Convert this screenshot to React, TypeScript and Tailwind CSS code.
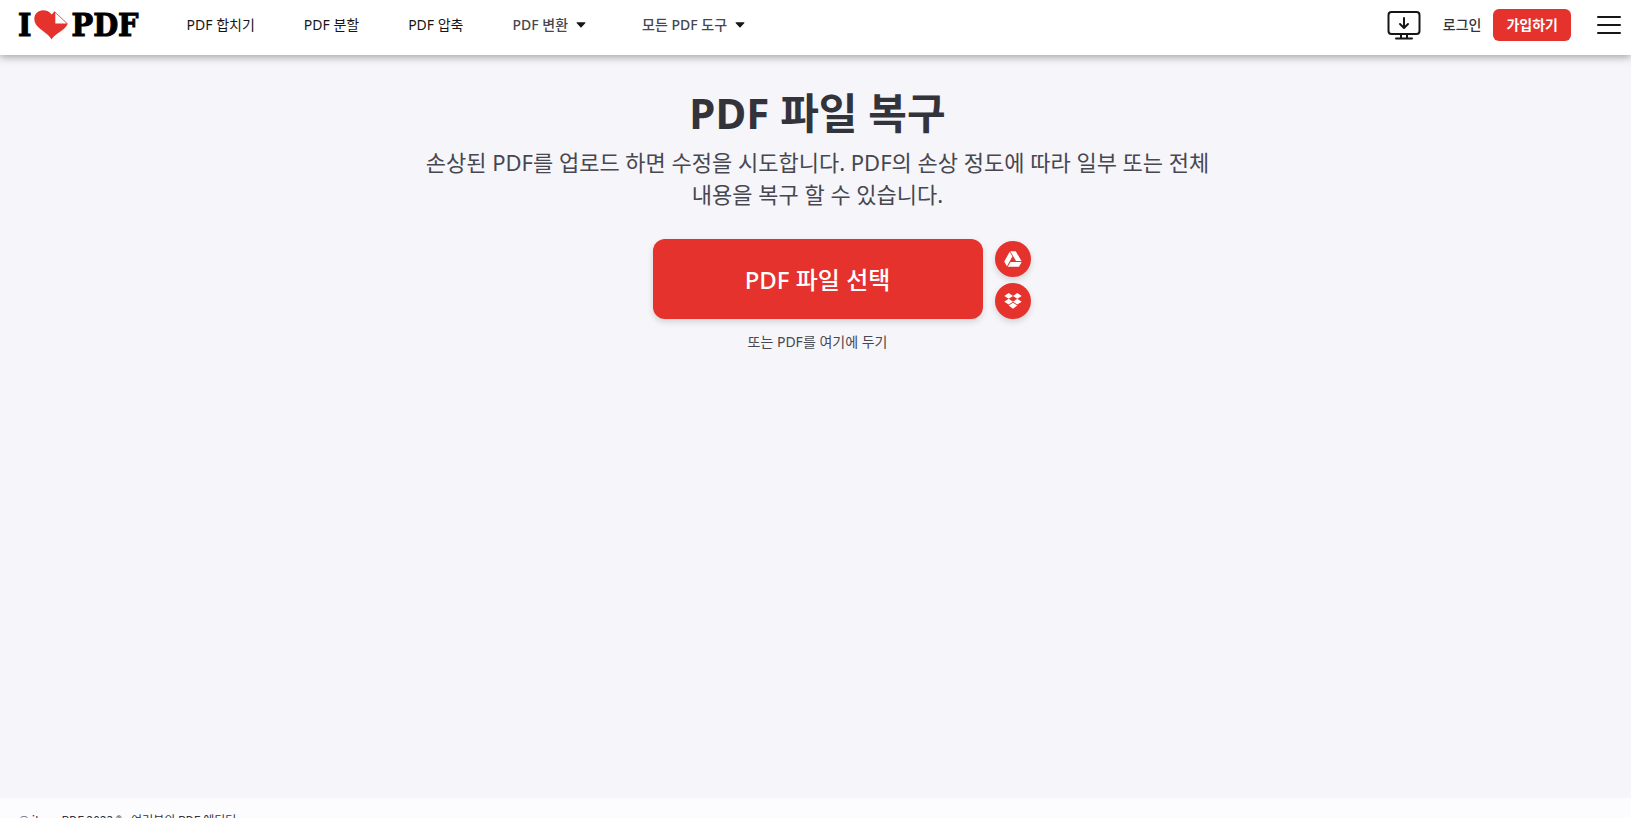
/**
 * Repair PDF page
 * Top bar, upload area and footer
 */

import React from 'react';

interface NavItem {
    label: string;
    hasMenu?: boolean;
}

const NAV_ITEMS: NavItem[] = [
    { label: 'PDF 합치기' },
    { label: 'PDF 분할' },
    { label: 'PDF 압축' },
    { label: 'PDF 변환', hasMenu: true },
    { label: '모든 PDF 도구', hasMenu: true },
];

function Logo() {
    return (
        <a
            href="#"
            aria-label="iLovePDF"
            className="flex items-center gap-[3px] font-['DejaVu_Serif_Condensed','DejaVu_Serif',serif] text-[32px] leading-8 font-bold text-black [-webkit-text-stroke:1px_black]"
        >
            <span>I</span>
            <svg width="34" height="30" viewBox="0 0 34 30" aria-hidden="true">
                <path d="M17.500 29.500C16.500 27 12.500 23.500 7 19.500C2.500 16.200.3 13 .3 9C.3 4 4.200.3 9 .3C12.500.3 15.800 1.800 17.800 4.500L20.500 1.200L33.800 13.700C32 17.500 28.500 20.200 25 22.600C21.500 25 18.800 27.500 17.500 29.500Z" fill="#e5322d" />
                <path d="M21.300 2.700V13.600H32.600Z" fill="#fff" />
            </svg>
            <span>PDF</span>
        </a>
    );
}

function Caret() {
    return (
        <svg width="10" height="6" viewBox="0 0 10 6" className="mr-2" aria-hidden="true">
            <path d="M1.200.3h7.600c.6 0 .8.6.4 1L5.500 5.300c-.3.300-.7.300-1 0L.8 1.300c-.4-.4-.2-1 .4-1z" fill="#161616" />
        </svg>
    );
}

function Header() {
    return (
        <header className="relative flex h-[55px] items-center bg-white pr-[9px] pb-[6px] pl-[18px] shadow-[0_2px_8px_rgba(0,0,0,0.35)]">
            <Logo />
            <nav className="ml-6 flex items-center pt-px text-sm">
                {NAV_ITEMS.map((item) =>
                    item.hasMenu ? (
                        <button key={item.label} type="button" className="flex items-center gap-2 px-6 font-medium text-[#47474f]">
                            {item.label}
                            <Caret />
                        </button>
                    ) : (
                        <a key={item.label} href="#" className="pr-[25px] pl-6 text-[#161616]">
                            {item.label}
                        </a>
                    )
                )}
            </nav>
            <div className="ml-auto flex items-center text-sm">
                <a href="#" aria-label="데스크톱 앱" className="mr-[22px]">
                    <svg width="34" height="30" viewBox="0 0 34 30" fill="none" stroke="#161616" strokeWidth="2" strokeLinecap="round" strokeLinejoin="round">
                        <rect x="1.500" y="2" width="31" height="22" rx="3" />
                        <path d="M14 24v3.500M20 24v3.500M9 28.500h16" />
                        <path d="M17 8v9.500M13 14l4 4 4-4" />
                    </svg>
                </a>
                <a href="#" className="mr-3 font-medium text-[#33333b]">로그인</a>
                <a href="#" className="rounded-md bg-[#e5322d] px-[13px] py-[6px] leading-5 font-bold text-white">가입하기</a>
                <button type="button" aria-label="메뉴" className="ml-[25px]">
                    <svg width="26" height="20" viewBox="0 0 26 20" stroke="#161616" strokeWidth="2" strokeLinecap="round">
                        <path d="M2 2h22M2 10h22M2 18h22" />
                    </svg>
                </button>
            </div>
        </header>
    );
}

function CloudButtons() {
    return (
        <div className="absolute top-[2px] left-full ml-3 flex flex-col gap-[6px]">
            <button type="button" aria-label="Google Drive" className="flex size-9 items-center justify-center rounded-full bg-[#e5322d] shadow-[0_3px_6px_rgba(0,0,0,0.14)]">
                <svg width="18" height="16" viewBox="0 0 18 16" fill="#fff">
                    <path d="M6.300.2h5.400L17.500 10h-5.500z" />
                    <path d="M5.700.8L8.400 5.500 2.900 15.200.2 10.500z" />
                    <path d="M6.500 10.900h11.200l-2.700 4.900H3.700z" />
                </svg>
            </button>
            <button type="button" aria-label="Dropbox" className="flex size-9 items-center justify-center rounded-full bg-[#e5322d] shadow-[0_3px_6px_rgba(0,0,0,0.14)]">
                <svg width="18" height="16" viewBox="0 0 18 16" fill="#fff">
                    <path d="M4.700 0L9 2.900 4.700 5.800.3 2.900z" />
                    <path d="M13.300 0l4.400 2.900-4.400 2.900L9 2.900z" />
                    <path d="M4.700 5.800L9 8.700l-4.300 2.900L.3 8.700z" />
                    <path d="M13.300 5.800l4.400 2.900-4.400 2.900L9 8.700z" />
                    <path d="M9 9.700l4.300 2.800L9 15.700l-4.300-3.200z" />
                </svg>
            </button>
        </div>
    );
}

export default function App() {
    return (
        <div className="bg-[#f5f5fa] font-['Noto_Sans','Noto_Sans_CJK_KR',sans-serif] break-keep">
            <Header />
            <main className="flex min-h-[calc(100vh-75px)] flex-col items-center pt-8 pl-1 text-center">
                <h1 className="text-[42px] leading-[52px] font-bold text-[#33333b]">PDF 파일 복구</h1>
                <p className="mt-[7px] max-w-[800px] text-[22px] leading-8 text-[#47474f]">
                    손상된 PDF를 업로드 하면 수정을 시도합니다. PDF의 손상 정도에 따라 일부 또는 전체 내용을 복구 할 수 있습니다.
                </p>
                <div className="relative mt-[29px]">
                    <button type="button" className="h-20 w-[330px] rounded-xl bg-[#e5322d] pt-px text-2xl font-medium text-white shadow-[0_3px_6px_rgba(0,0,0,0.14)]">
                        PDF 파일 선택
                    </button>
                    <CloudButtons />
                </div>
                <p className="mt-[13px] text-sm text-[#47474f]">또는 PDF를 여기에 두기</p>
            </main>
            <footer className="bg-[#fcfcfe] px-[19px] pt-3 pb-4 font-['Noto_Sans_CJK_KR',sans-serif] text-xs leading-5 text-[#33333b]">
                © iLovePDF 2023 ® - 여러분의 PDF 에디터
            </footer>
        </div>
    );
}
